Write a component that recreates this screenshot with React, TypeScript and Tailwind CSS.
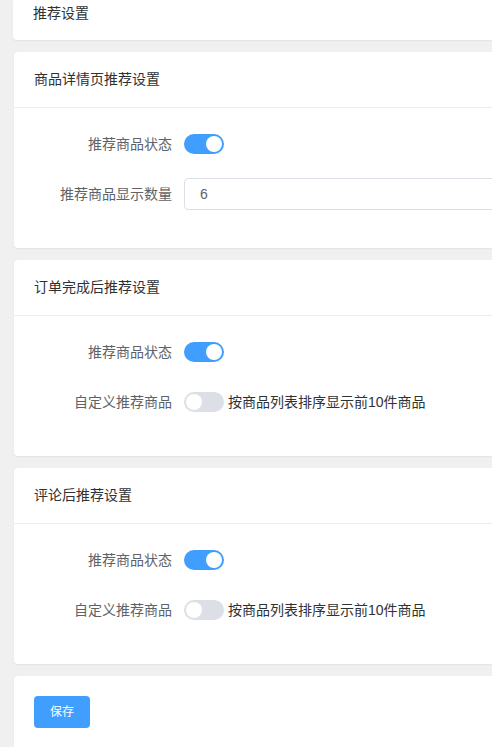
import React, { useState } from 'react';

const FONT = "font-['Liberation_Sans','Noto_Sans_CJK_SC',sans-serif]";

const Switch: React.FC<{ on: boolean; onChange: () => void }> = ({ on, onChange }) => (
  <button
    onClick={onChange}
    className={`relative w-10 h-5 rounded-full shrink-0 transition-colors ${on ? 'bg-[#409eff]' : 'bg-[#dcdfe6]'}`}
  >
    <span
      className={`absolute top-[2px] w-4 h-4 rounded-full bg-white transition-all ${on ? 'left-[22px]' : 'left-[2px]'}`}
    />
  </button>
);

const FormItem: React.FC<{ label: string; children: React.ReactNode }> = ({ label, children }) => (
  <div className="flex items-center h-8 mb-[18px]">
    <label className="w-[150px] shrink-0 pr-3 text-right text-sm text-[#606266]">{label}</label>
    <div className="flex items-center flex-1">{children}</div>
  </div>
);

const Card: React.FC<{ title: string; children: React.ReactNode }> = ({ title, children }) => (
  <div className="bg-white rounded mb-3 shadow-[0_1px_2px_rgba(0,0,0,0.06)]">
    <div className="px-5 py-[18px] leading-[19px] text-sm text-[#303133] border-b border-[#ebeef5]">{title}</div>
    <div className="p-5">{children}</div>
  </div>
);

const App: React.FC = () => {
  const [detailOn, setDetailOn] = useState(true);
  const [count, setCount] = useState('6');
  const [orderOn, setOrderOn] = useState(true);
  const [orderCustom, setOrderCustom] = useState(false);
  const [commentOn, setCommentOn] = useState(true);
  const [commentCustom, setCommentCustom] = useState(false);

  return (
    <div className={`min-h-screen w-full overflow-hidden bg-[#f0f0f0] ${FONT}`}>
      <div className="w-[700px] ml-[13px]">
        <div className="bg-white h-10 pt-[3px] pl-5 text-sm leading-5 text-[#303133] mb-3 rounded-b shadow-[0_1px_2px_rgba(0,0,0,0.06)]">
          推荐设置
        </div>

        <div className="ml-px">
          <Card title="商品详情页推荐设置">
            <FormItem label="推荐商品状态">
              <Switch on={detailOn} onChange={() => setDetailOn(!detailOn)} />
            </FormItem>
            <FormItem label="推荐商品显示数量">
              <input
                value={count}
                onChange={e => setCount(e.target.value)}
                className="w-full h-8 px-[15px] text-sm text-[#606266] border border-[#dcdfe6] rounded outline-none"
              />
            </FormItem>
          </Card>

          <Card title="订单完成后推荐设置">
            <FormItem label="推荐商品状态">
              <Switch on={orderOn} onChange={() => setOrderOn(!orderOn)} />
            </FormItem>
            <FormItem label="自定义推荐商品">
              <Switch on={orderCustom} onChange={() => setOrderCustom(!orderCustom)} />
              <span className="ml-1 text-sm text-[#303133]">按商品列表排序显示前10件商品</span>
            </FormItem>
          </Card>

          <Card title="评论后推荐设置">
            <FormItem label="推荐商品状态">
              <Switch on={commentOn} onChange={() => setCommentOn(!commentOn)} />
            </FormItem>
            <FormItem label="自定义推荐商品">
              <Switch on={commentCustom} onChange={() => setCommentCustom(!commentCustom)} />
              <span className="ml-1 text-sm text-[#303133]">按商品列表排序显示前10件商品</span>
            </FormItem>
          </Card>

          <div className="bg-white rounded p-5 pb-8 shadow-[0_1px_2px_rgba(0,0,0,0.06)]">
            <button className="w-14 h-8 rounded bg-[#409eff] text-white text-xs">保存</button>
          </div>
        </div>
      </div>
    </div>
  );
};

export default App;
